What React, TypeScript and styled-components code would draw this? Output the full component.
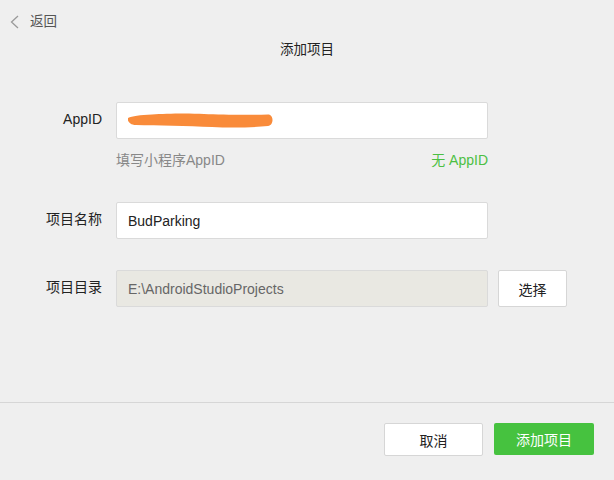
import * as React from 'react';
import styled, { createGlobalStyle } from 'styled-components';

const GlobalStyle = createGlobalStyle`
  html, body {
    margin: 0;
    padding: 0;
    background: #efefef;
  }
  body {
    font-family: "Liberation Sans", "Noto Sans CJK SC", Arial, sans-serif;
    font-size: 14px;
    color: #333;
  }
`;

const Page = styled.div`
  height: 480px;
  display: flex;
  flex-direction: column;
  background: #efefef;
`;

const BackLink = styled.a`
  display: flex;
  align-items: center;
  gap: 11px;
  margin: 12px 0 0 10px;
  height: 20px;
  line-height: 20px;
  color: #555;
  font-size: 13.5px;
  cursor: pointer;
`;

const Title = styled.h1`
  margin: 8px 0 0;
  text-align: center;
  font-size: 13.5px;
  font-weight: normal;
  line-height: 20px;
  color: #222;
`;

const Form = styled.div`
  margin-top: 42px;
  display: flex;
  flex-direction: column;
`;

const Row = styled.div<{ $gap?: number }>`
  display: grid;
  grid-template-columns: 102px 372px auto;
  column-gap: 14px;
  align-items: center;
  margin-top: ${({ $gap }) => $gap ?? 0}px;
`;

const Label = styled.label`
  text-align: right;
  line-height: 20px;
  color: #222;
  padding-bottom: 3px;
`;

const Field = styled.div<{ $disabled?: boolean }>`
  height: 37px;
  box-sizing: border-box;
  border: 1px solid #dadada;
  border-radius: 2px;
  background: ${({ $disabled }) => ($disabled ? '#e9e8e2' : '#fff')};
  color: ${({ $disabled }) => ($disabled ? '#666' : '#222')};
  display: flex;
  align-items: center;
  padding-left: 11px;
  line-height: 20px;
`;

const Hint = styled.div`
  grid-column: 2;
  display: flex;
  justify-content: space-between;
  margin-top: 11px;
  line-height: 20px;
  color: #888;
`;

const NoId = styled.a`
  color: #4cbf43;
  cursor: pointer;
`;

const Button = styled.button<{ $primary?: boolean }>`
  box-sizing: border-box;
  width: ${({ $primary }) => ($primary ? 100 : 99)}px;
  height: ${({ $primary }) => ($primary ? 32 : 33)}px;
  border: ${({ $primary }) => ($primary ? 'none' : '1px solid #d6d6d6')};
  border-radius: 2px;
  background: ${({ $primary }) => ($primary ? '#46c23f' : '#fff')};
  color: ${({ $primary }) => ($primary ? '#fff' : '#222')};
  font-family: inherit;
  font-size: 14px;
  padding: 0;
  cursor: pointer;
`;

const PickButton = styled(Button)`
  width: 69px;
  height: 37px;
  margin-left: -4px;
`;

const Footer = styled.div`
  margin-top: auto;
  height: 78px;
  box-sizing: border-box;
  border-top: 1px solid #d6d6d6;
  display: flex;
  justify-content: flex-end;
  align-items: flex-start;
  gap: 11px;
  padding: 20px 20px 0 0;
`;

const Chevron = () => (
  <svg width="9" height="14" viewBox="0 0 9 14" fill="none">
    <path d="M8 1 L1.5 7 L8 13" stroke="#9a9a9a" strokeWidth="1.3" />
  </svg>
);

const Redacted = () => (
  <svg width="145" height="15" viewBox="0 0 145 15">
    <path
      d="M0 5 C4 3 12 2 24 1.5 C38 0.5 60 0 76 1 C94 1.8 122 2 140 1.5 C146 1.5 146 12 140 13 C124 14.5 104 15 84 14 C60 13 28 12.5 8 12 C1 12 -1 7 0 5 Z"
      fill="#f98b3a"
    />
  </svg>
);

export default function App() {
  return (
    <>
      <GlobalStyle />
      <Page>
        <BackLink>
          <Chevron />
          返回
        </BackLink>
        <Title>添加项目</Title>
        <Form>
          <Row>
            <Label>AppID</Label>
            <Field>
              <Redacted />
            </Field>
          </Row>
          <Row>
            <Hint>
              <span>填写小程序AppID</span>
              <NoId>无 AppID</NoId>
            </Hint>
          </Row>
          <Row $gap={32}>
            <Label>项目名称</Label>
            <Field>BudParking</Field>
          </Row>
          <Row $gap={31}>
            <Label>项目目录</Label>
            <Field $disabled>E:\AndroidStudioProjects</Field>
            <PickButton>选择</PickButton>
          </Row>
        </Form>
        <Footer>
          <Button>取消</Button>
          <Button $primary>添加项目</Button>
        </Footer>
      </Page>
    </>
  );
}
